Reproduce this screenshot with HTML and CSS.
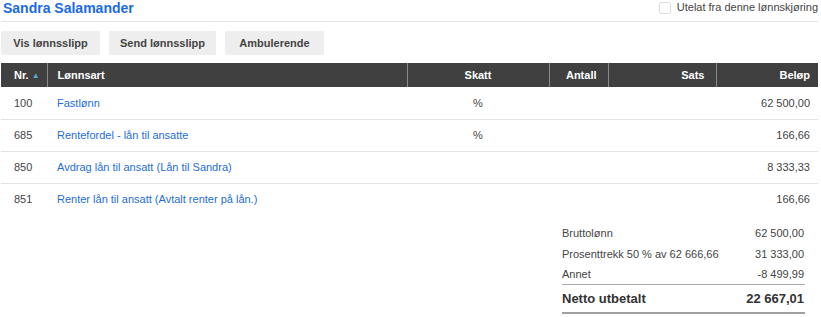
FILE: index.html
```html
<!DOCTYPE html>
<html lang="no">
<head>
<meta charset="utf-8">
<title>Sandra Salamander</title>
<link rel="stylesheet" href="styles.css">
</head>
<body>
<div class="page">
  <div class="titlebar">
    <h1 class="name">Sandra Salamander</h1>
    <label class="exclude"><span class="box"></span><span>Utelat fra denne lønnskjøring</span></label>
  </div>
  <div class="actions">
    <button class="btn b1">Vis lønnsslipp</button>
    <button class="btn b2">Send lønnsslipp</button>
    <button class="btn b3">Ambulerende</button>
  </div>
  <table class="lines">
    <colgroup>
      <col class="c-nr"><col class="c-art"><col class="c-skatt"><col class="c-antall"><col class="c-sats"><col class="c-belop">
    </colgroup>
    <thead>
      <tr>
        <th class="nr">Nr. <span class="sort">▲</span></th>
        <th class="art">Lønnsart</th>
        <th class="skatt">Skatt</th>
        <th class="num">Antall</th>
        <th class="num">Sats</th>
        <th class="num last">Beløp</th>
      </tr>
    </thead>
    <tbody>
      <tr><td class="nr">100</td><td class="art"><a>Fastlønn</a></td><td class="skatt">%</td><td></td><td></td><td class="num last">62 500,00</td></tr>
      <tr><td class="nr">685</td><td class="art"><a>Rentefordel - lån til ansatte</a></td><td class="skatt">%</td><td></td><td></td><td class="num last">166,66</td></tr>
      <tr><td class="nr">850</td><td class="art"><a>Avdrag lån til ansatt (Lån til Sandra)</a></td><td class="skatt"></td><td></td><td></td><td class="num last">8 333,33</td></tr>
      <tr><td class="nr">851</td><td class="art"><a>Renter lån til ansatt (Avtalt renter på lån.)</a></td><td class="skatt"></td><td></td><td></td><td class="num last">166,66</td></tr>
    </tbody>
  </table>
  <div class="summary">
    <div class="srow"><span>Bruttolønn</span><span>62 500,00</span></div>
    <div class="srow"><span>Prosenttrekk 50 % av 62 666,66</span><span>31 333,00</span></div>
    <div class="srow annet"><span>Annet</span><span>-8 499,99</span></div>
    <div class="srow total"><span>Netto utbetalt</span><span>22 667,01</span></div>
  </div>
</div>
</body>
</html>
```
FILE: styles.css
```css
* { box-sizing: border-box; }
html, body { margin: 0; padding: 0; background: #fff; }
body {
  font-family: "Liberation Sans", Arial, sans-serif;
  font-size: 11px;
  color: #444;
}
.page { width: 817px; margin-left: 1px; }
.titlebar {
  display: flex;
  justify-content: space-between;
  align-items: flex-start;
  height: 22px;
  border-bottom: 1px solid #e6e6e6;
}
.name {
  margin: 0 0 0 2px;
  font-size: 14px;
  line-height: 17px;
  font-weight: bold;
  color: #1a6be0;
}
.exclude {
  display: flex;
  align-items: center;
  gap: 6px;
  margin-top: 1px;
  line-height: 13px;
  color: #444;
}
.box {
  width: 12px;
  height: 12px;
  border: 1px solid #dcdcdc;
  border-radius: 2px;
  background: #fff;
}
.actions {
  display: flex;
  gap: 9px;
  margin-top: 9px;
}
.btn {
  height: 24px;
  border: none;
  border-radius: 2px;
  background: #eeeeee;
  font-family: "Liberation Sans", Arial, sans-serif;
  font-size: 11px;
  font-weight: bold;
  color: #444;
  padding: 0;
}
.b1 { width: 99px; }
.b2 { width: 107px; }
.b3 { width: 99px; }
.lines {
  margin-top: 8px;
  width: 817px;
  border-collapse: collapse;
  table-layout: fixed;
}
.c-nr { width: 46px; }
.c-art { width: 360px; }
.c-skatt { width: 142px; }
.c-antall { width: 59px; }
.c-sats { width: 108px; }
.c-belop { width: 102px; }
th {
  background: #404040;
  color: #fff;
  font-weight: bold;
  height: 24px;
  padding: 0 11px 0 0;
  border-left: 1px solid #8a8a8a;
  text-align: right;
  white-space: nowrap;
}
th:first-child { border-left: none; }
th.nr { text-align: left; padding-left: 13px; }
th.art { text-align: left; padding-left: 10px; }
th.skatt, td.skatt { text-align: center; padding-right: 0; }
th.last, td.last { padding-right: 8px; }
.sort { color: #5aa7d6; font-size: 8px; vertical-align: 1px; }
td {
  height: 32px;
  padding: 0 11px 0 0;
  border-bottom: 1px solid #e3e3e3;
  text-align: right;
  color: #444;
}
tbody tr:last-child td { border-bottom: none; }
td.nr { text-align: left; padding-left: 13px; }
td.art { text-align: left; padding-left: 10px; }
td a { color: #1f6ed6; }
.summary {
  width: 243px;
  margin: 7px 0 0 561px;
}
.srow {
  display: flex;
  justify-content: space-between;
  height: 21px;
  align-items: center;
  padding-right: 1px;
}
.srow.annet { border-bottom: 1px solid #a8a8a8; }
.srow.total {
  height: 29px;
  font-size: 13px;
  font-weight: bold;
  color: #333;
  border-bottom: 2px solid #a0a0a0;
}
```
